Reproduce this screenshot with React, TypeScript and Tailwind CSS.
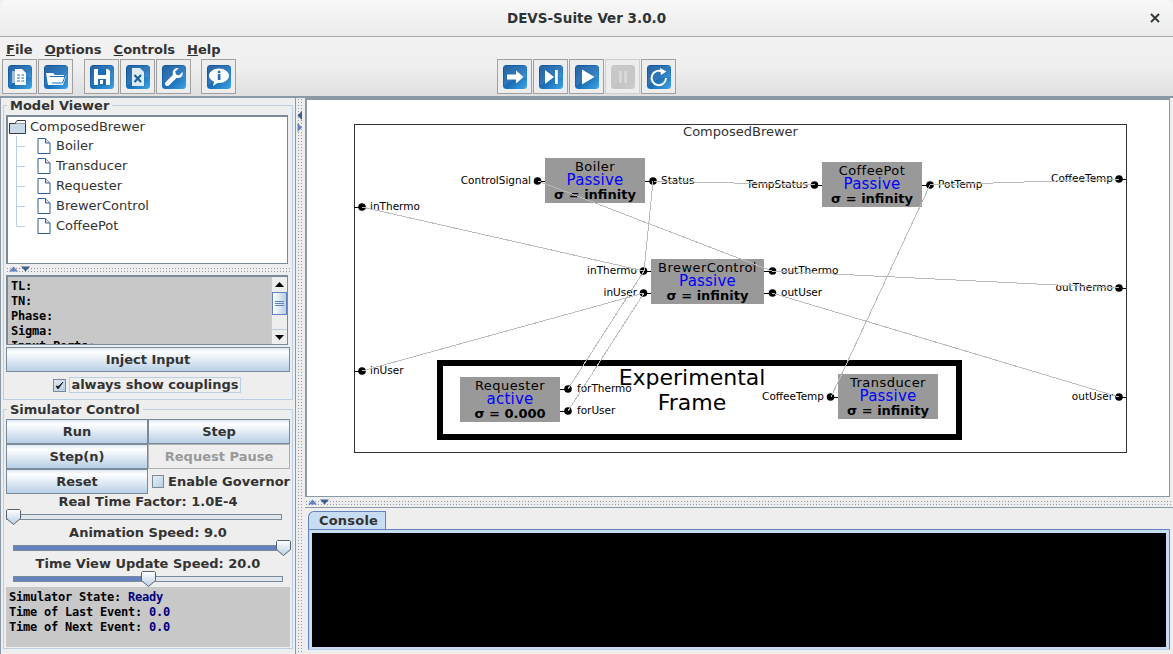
import React from "react";

const BTN =
  "flex items-center justify-center font-bold text-[13px] text-[#333] bg-linear-to-b from-[#dfe9f3] via-white via-[18%] to-[#b8cfe5] border border-[#7a8a99]";
const MONO = "font-['DejaVu_Sans_Mono',monospace] font-bold text-[12px] leading-[15px] tracking-[-0.22px] text-black";
const DOTS =
  "bg-[radial-gradient(circle,#8f9ba8_0.7px,transparent_0.8px)] bg-size-[3px_3px]";

function Glyph({ id, disabled, children }: { id: string; disabled?: boolean; children: React.ReactNode }) {
  return (
    <svg width="24" height="24" viewBox="0 0 24 24">
      <defs>
        <linearGradient id={id} x1="0" y1="0" x2="1" y2="1">
          <stop offset="0" stopColor={disabled ? "#c8c8c8" : "#0f4f96"} />
          <stop offset="0.55" stopColor={disabled ? "#c4c4c4" : "#1a6fb8"} />
          <stop offset="1" stopColor={disabled ? "#cdcdcd" : "#3fa6e6"} />
        </linearGradient>
      </defs>
      <rect x="0" y="0" width="24" height="24" rx="3.5" fill={`url(#${id})`} />
      <path d="M1 1 H23 V12 C14 12 8 15 1 21 Z" fill="#ffffff" opacity={disabled ? 0.05 : 0.1} />
      {children}
    </svg>
  );
}

function ToolBtn({ disabled, id, children }: { disabled?: boolean; id: string; children: React.ReactNode }) {
  return (
    <div
      className={`w-[35px] h-[35px] flex items-center justify-center border bg-[#ededed] ${
        disabled ? "border-[#d0d0d0]" : "border-[#a0a0a0]"
      }`}
    >
      <Glyph id={id} disabled={disabled}>
        {children}
      </Glyph>
    </div>
  );
}

function FileIcon() {
  return (
    <svg width="14" height="16" viewBox="0 0 14 16" className="shrink-0">
      <path d="M1 0.5 H8.5 L13 5 V15.5 H1 Z" fill="#fff" stroke="#2f5f98" strokeWidth="1" />
      <path d="M8.5 0.5 V5 H13" fill="#d4e2f0" stroke="#2f5f98" strokeWidth="1" />
    </svg>
  );
}

function TreeRow({ label, last }: { label: string; last?: boolean }) {
  return (
    <div className="flex items-center h-[20px]">
      <svg width="22" height="20" viewBox="0 0 22 20" className="shrink-0">
        <path d={last ? "M1.5 0 V10.5 H10" : "M1.5 0 V20 M1.5 10.5 H10"} stroke="#b8cfe5" strokeWidth="1" fill="none" />
      </svg>
      <FileIcon />
      <span className="ml-[5px]">{label}</span>
    </div>
  );
}

function Slider({ trackClass, thumbClass, fillClass }: { trackClass: string; thumbClass: string; fillClass?: string }) {
  return (
    <div className="relative h-[16px]">
      <div className={`absolute top-[5px] h-[6px] border border-[#7a8a99] bg-[#dfe6ee] ${trackClass}`}>
        {fillClass && <div className={`h-full bg-[#6382bf] ${fillClass}`} />}
      </div>
      <svg width="15" height="16" viewBox="0 0 15 16" className={`absolute top-0 ${thumbClass}`}>
        <defs>
          <linearGradient id="thumbGrad" x1="0" y1="0" x2="0" y2="1">
            <stop offset="0" stopColor="#ffffff" />
            <stop offset="1" stopColor="#b8cfe5" />
          </linearGradient>
        </defs>
        <path d="M1.5 0.5 H13.5 L14.5 1.5 V9.5 L7.5 15.5 L0.5 9.5 V1.5 Z" fill="url(#thumbGrad)" stroke="#55606c" />
      </svg>
    </div>
  );
}

function Splitter({ className }: { className: string }) {
  return (
    <div className={`relative ${className}`}>
      <div className={`absolute inset-x-0 top-[3px] h-[6px] ${DOTS}`} />
      <svg width="24" height="6" viewBox="0 0 24 6" className="absolute left-[3px] top-[2px]">
        <path d="M0 5.5 L4.5 0.5 L9 5.5 Z" fill="#6382bf" />
        <path d="M12 0.5 H21 L16.5 5.5 Z" fill="#3f5f8f" />
      </svg>
    </div>
  );
}

type Port = { x: number; y: number; to: number; label: string; side: "l" | "r"; end: number };

const OX = 307;
const OY = 100;

const ports: Port[] = [
  { x: 362, y: 207, to: 354, label: "inThermo", side: "r", end: 370 },
  { x: 362, y: 371, to: 354, label: "inUser", side: "r", end: 370 },
  { x: 537.5, y: 181, to: 545, label: "ControlSignal", side: "l", end: 529 },
  { x: 653, y: 181, to: 645, label: "Status", side: "r", end: 661 },
  { x: 814.5, y: 185, to: 822, label: "TempStatus", side: "l", end: 806 },
  { x: 930, y: 185, to: 922, label: "PotTemp", side: "r", end: 938 },
  { x: 1119, y: 179, to: 1126, label: "CoffeeTemp", side: "l", end: 1111 },
  { x: 1119, y: 288, to: 1126, label: "outThermo", side: "l", end: 1111 },
  { x: 1119, y: 397, to: 1126, label: "outUser", side: "l", end: 1111 },
  { x: 643.5, y: 271, to: 651, label: "inThermo", side: "l", end: 635 },
  { x: 643.5, y: 293, to: 651, label: "inUser", side: "l", end: 635 },
  { x: 772.5, y: 271, to: 764, label: "outThermo", side: "r", end: 781 },
  { x: 772.5, y: 293, to: 764, label: "outUser", side: "r", end: 781 },
  { x: 568, y: 389, to: 560, label: "forThermo", side: "r", end: 577 },
  { x: 568, y: 411, to: 560, label: "forUser", side: "r", end: 577 },
  { x: 830.5, y: 397, to: 838, label: "CoffeeTemp", side: "l", end: 822 },
];

const links: [number, number, number, number][] = [
  [362, 207, 644, 271],
  [362, 371, 644, 293],
  [538, 181, 772, 271],
  [653, 181, 815, 185],
  [653, 181, 644, 271],
  [772, 271, 1119, 288],
  [772, 293, 1119, 397],
  [930, 185, 1119, 179],
  [930, 185, 831, 397],
  [568, 389, 644, 271],
  [568, 411, 644, 293],
];

const nodes = [
  { name: "Boiler", phase: "Passive", sigma: "σ = infinity", x: 545, y: 158, w: 100 },
  { name: "BrewerControl", phase: "Passive", sigma: "σ = infinity", x: 651, y: 259, w: 113 },
  { name: "CoffeePot", phase: "Passive", sigma: "σ = infinity", x: 822, y: 162, w: 100 },
  { name: "Requester", phase: "active", sigma: "σ = 0.000", x: 460, y: 377, w: 100 },
  { name: "Transducer", phase: "Passive", sigma: "σ = infinity", x: 838, y: 374, w: 100 },
];

function Diagram() {
  return (
    <div className="relative w-full h-full bg-white overflow-hidden">
      {/* coupled model */}
      <div className="absolute left-[47px] top-[24px] w-[773px] h-[329px] border border-[#333]" />
      <div className="absolute left-[47px] top-[24px] w-[773px] text-center text-[13px] leading-[15px] pt-[0px] text-[#333]">
        ComposedBrewer
      </div>
      {/* experimental frame */}
      <div className="absolute left-[130px] top-[260px] w-[525px] h-[80px] border-[6px] border-black" />
      <div className="absolute left-[260px] top-[265px] w-[250px] text-center text-[22px] leading-[25px] text-black">
        <div>Experimental</div>
        <div>Frame</div>
      </div>
      {nodes.map((n) => (
        <div
          key={n.name}
          className="absolute h-[45px] bg-[#999999] flex flex-col items-center justify-center text-black whitespace-nowrap overflow-hidden"
          style={{ left: n.x - OX, top: n.y - OY, width: n.w }}
        >
          <div className="text-[13px] font-medium leading-[13px] tracking-[0.45px]">{n.name}</div>
          <div className="text-[15px] leading-[14px] text-[#0000ff] tracking-[0.2px]">{n.phase}</div>
          <div className="text-[13px] font-bold leading-[15px]">{n.sigma}</div>
        </div>
      ))}
      {ports.map((p, i) => (
        <div
          key={i}
          className="absolute text-[10.5px] leading-[12px] text-black whitespace-nowrap"
          style={
            p.side === "r"
              ? { left: p.end - OX, top: p.y - OY - 7 }
              : { right: 1173 - 3 - OX - (p.end - OX) - 3 + 0, top: p.y - OY - 7 }
          }
        >
          {p.label}
        </div>
      ))}
      <svg className="absolute left-0 top-0" width="863" height="397" viewBox={`${OX} ${OY} 863 397`}>
        {ports.map((p, i) => (
          <g key={i}>
            <line x1={p.x} y1={p.y} x2={p.to} y2={p.y} stroke="#000" strokeWidth="1" shapeRendering="crispEdges" />
            <circle cx={p.x} cy={p.y} r="3.8" fill="#000" />
          </g>
        ))}
        {links.map((l, i) => (
          <line
            key={i}
            x1={l[0]}
            y1={l[1]}
            x2={l[2]}
            y2={l[3]}
            stroke="#bbbbbb"
            strokeWidth="1"
            shapeRendering="crispEdges"
          />
        ))}
      </svg>
    </div>
  );
}

export default function App() {
  return (
    <div className="w-[1173px] h-[654px] overflow-hidden flex flex-col bg-[#eeeeee] font-['DejaVu_Sans',sans-serif] text-[13px] text-[#333]">
      {/* Title bar */}
      <div className="h-[37px] shrink-0 rounded-t-[6px] bg-linear-to-b from-[#f8f8f8] to-[#ebebeb] border-b border-[#a8a8a8] flex items-center justify-center relative font-bold text-[#2e3436] text-[13.5px]">
        DEVS-Suite Ver 3.0.0
        <svg width="10" height="10" viewBox="0 0 10 10" className="absolute right-[13px] top-[13px]">
          <path d="M1 1 L9 9 M9 1 L1 9" stroke="#2e3436" strokeWidth="1.8" />
        </svg>
      </div>

      {/* Menu + toolbar */}
      <div className="h-[60px] shrink-0 bg-linear-to-b from-[#f2f2f2] via-[#efefef] to-[#dfdfdf] flex flex-col">
        <div className="h-[22px] flex items-center gap-[12px] pl-[6px] pt-[3px] font-bold text-[13px] leading-[16px]">
          <span><u>F</u>ile</span>
          <span><u>O</u>ptions</span>
          <span><u>C</u>ontrols</span>
          <span><u>H</u>elp</span>
        </div>
        <div className="relative h-[35px] flex items-center pl-[2px]">
          <div className="flex gap-[1px]">
            <ToolBtn id="g1">
              <path d="M7 4 H14 L18 8 V20 H7 Z" fill="#fff" />
              <path d="M9 10 H12 M9 13 H12 M9 16 H12 M13.5 10 H16 M13.5 13 H16 M13.5 16 H16" stroke="#1a6fb8" strokeWidth="1.2" />
              <path d="M4 6 H7 V18 H4 Z" fill="#fff" opacity="0.55" />
            </ToolBtn>
            <ToolBtn id="g2">
              <path d="M2 8 H9 L11 10 H20 V11.5 H22 L19 20 H4 Z" fill="#fff" />
              <path d="M6 11.5 H21 L18.5 18 H8" fill="none" stroke="#1a6fb8" strokeWidth="1" />
            </ToolBtn>
          </div>
          <div className="flex gap-[1px] ml-[11px]">
            <ToolBtn id="g3">
              <path d="M4 4 H18 L20 6 V20 H4 Z" fill="#fff" />
              <rect x="8" y="4" width="8" height="6" fill="#1a6fb8" />
              <rect x="8" y="14" width="8" height="6" fill="#1a6fb8" />
              <rect x="10" y="15" width="3" height="4" fill="#fff" />
            </ToolBtn>
            <ToolBtn id="g4">
              <path d="M6 3 H14 L18 7 V21 H6 Z" fill="#fff" opacity="0.85" />
              <path d="M8.5 10 L15 17 M15 10 L8.5 17" stroke="#15609f" strokeWidth="2" />
            </ToolBtn>
            <ToolBtn id="g5">
              <path
                d="M20.5 7 L17 10.5 L14 9.5 L13.2 6.5 L16.7 3.2 C13.5 2.5 10.5 4.8 10.8 8.3 L11 9.7 L3.6 17.2 C2.5 18.4 3 20 4 20.7 C5 21.4 6.3 21.2 7.2 20.3 L14.5 13 C18 13.8 21.5 11 20.5 7 Z"
                fill="#fff"
              />
            </ToolBtn>
          </div>
          <div className="flex ml-[10px]">
            <ToolBtn id="g6">
              <path d="M12 3.5 C17.5 3.5 22 6.8 22 10.8 C22 14.8 17.5 18 12 18 L10.5 18 L6 21 L7 16.6 C3.9 15.3 2 13.2 2 10.8 C2 6.8 6.5 3.5 12 3.5 Z" fill="#fff" />
              <rect x="10.8" y="9" width="2.6" height="6" fill="#1a6fb8" />
              <rect x="10.8" y="5.8" width="2.6" height="2.2" fill="#1a6fb8" />
            </ToolBtn>
          </div>
          <div className="flex gap-[1px] ml-[261px]">
            <ToolBtn id="g7">
              <path d="M4 9.5 H13 V5.5 L20.5 12 L13 18.5 V14.5 H4 Z" fill="#fff" />
            </ToolBtn>
            <ToolBtn id="g8">
              <path d="M6 5 L15 12 L6 19 Z" fill="#fff" />
              <rect x="16" y="5" width="2.8" height="14" fill="#fff" />
            </ToolBtn>
            <ToolBtn id="g9">
              <path d="M7 4.5 L19.5 12 L7 19.5 Z" fill="#fff" />
            </ToolBtn>
            <ToolBtn id="g10" disabled>
              <rect x="8" y="6" width="2.8" height="12" fill="#dadada" />
              <rect x="13.2" y="6" width="2.8" height="12" fill="#dadada" />
            </ToolBtn>
            <ToolBtn id="g11">
              <path d="M15.5 6.8 A7.2 7.2 0 1 0 19 13" fill="none" stroke="#fff" strokeWidth="2" />
              <path d="M13 3 L19.5 6.5 L14 10 Z" fill="#fff" />
            </ToolBtn>
          </div>
        </div>
      </div>

      {/* Main */}
      <div className="flex-1 min-h-0 flex border-t-2 border-[#8a99a6] -mt-[1px]">
        {/* Left column */}
        <div className="w-[296px] shrink-0 border-x border-[#8a99a6] pl-[2px] pr-[2px] pt-[7px] flex flex-col">
          {/* Model viewer */}
          <div className="relative h-[295px] shrink-0 border border-[#b8cfe5] px-[2px] pt-[9px]">
            <div className="absolute left-[3px] -top-[8px] px-[3px] bg-[#eeeeee] font-bold leading-[16px]">Model Viewer</div>
            <div className="w-[282px] h-[149px] bg-white border border-[#7a8a99] border-t-2 border-l-2 pl-[1px] pt-[1px]">
              <div className="flex items-center h-[18px]">
                <svg width="17" height="14" viewBox="0 0 17 14" className="shrink-0">
                  <path d="M0.5 3.5 H16.5 V13.5 H0.5 Z" fill="#c9d9ea" stroke="#33393f" />
                  <path d="M0.5 3.5 L6 3.5 L8 0.5 H16.5 V3.5" fill="#fff" stroke="#33393f" />
                </svg>
                <span className="ml-[4px]">ComposedBrewer</span>
              </div>
              <div className="pl-[6px]">
                <TreeRow label="Boiler" />
                <TreeRow label="Transducer" />
                <TreeRow label="Requester" />
                <TreeRow label="BrewerControl" />
                <TreeRow label="CoffeePot" last />
              </div>
            </div>
            <Splitter className="h-[11px]" />
            <div className="w-[282px] h-[70px] flex border border-[#7a8a99] border-t-2 border-l-2 bg-[#c8c8c8] overflow-hidden">
              <div className={`flex-1 pl-[3px] pt-[2px] ${MONO}`}>
                <div>TL:</div>
                <div>TN:</div>
                <div>Phase:</div>
                <div>Sigma:</div>
                <div>Input Ports:</div>
              </div>
              <div className="w-[16px] bg-[#eeeeee] border-l border-[#b8cfe5] flex flex-col">
                <div className="h-[15px] flex items-center justify-center">
                  <svg width="9" height="5" viewBox="0 0 9 5"><path d="M0 5 L4.5 0 L9 5 Z" fill="#000" /></svg>
                </div>
                <div className="h-[23px] border border-[#6382bf] bg-linear-to-r from-[#fff] to-[#b8cfe5] flex flex-col items-center justify-center gap-[1px]">
                  <div className="w-[9px] h-[1px] bg-[#6382bf]" />
                  <div className="w-[9px] h-[1px] bg-[#6382bf]" />
                  <div className="w-[9px] h-[1px] bg-[#6382bf]" />
                </div>
                <div className="flex-1" />
                <div className="h-[15px] border-t border-[#b8cfe5] flex items-center justify-center">
                  <svg width="9" height="5" viewBox="0 0 9 5"><path d="M0 0 L9 0 L4.5 5 Z" fill="#000" /></svg>
                </div>
              </div>
            </div>
            <div className={`${BTN} w-[284px] h-[25px] mt-[2px]`}>Inject Input</div>
            <div className="flex items-center justify-center h-[24px] mt-[1px] pr-[2px]">
              <div className="w-[13px] h-[13px] border border-[#7a8a99] bg-linear-to-br from-[#dfe9f3] to-[#b8cfe5] flex items-center justify-center">
                <svg width="9" height="9" viewBox="0 0 9 9"><path d="M1 5 L3 8 L8 1 L4 5 L3 5.5 Z" fill="#111" stroke="#111" strokeWidth="0.8" /></svg>
              </div>
              <span className="ml-[3px] px-[1px] h-[16px] flex items-center border border-[#b8cfe5] font-bold leading-[14px]">
                always show couplings
              </span>
            </div>
          </div>

          {/* Simulator control */}
          <div className="relative h-[240px] shrink-0 mt-[9px] border border-[#b8cfe5] px-[2px] pt-[9px]">
            <div className="absolute left-[3px] -top-[8px] px-[3px] bg-[#eeeeee] font-bold leading-[16px]">Simulator Control</div>
            <div className="grid grid-cols-2 w-[284px] auto-rows-[25px]">
              <div className={BTN}>Run</div>
              <div className={BTN}>Step</div>
              <div className={BTN}>Step(n)</div>
              <div className="flex items-center justify-center font-bold text-[#999] border border-[#b0b0b0]">Request Pause</div>
              <div className={BTN}>Reset</div>
              <div className="flex items-center pl-[4px] font-bold">
                <div className="w-[13px] h-[13px] border border-[#7a8a99] bg-linear-to-br from-[#e6eef6] to-[#b8cfe5]" />
                <span className="ml-[4px] whitespace-nowrap">Enable Governor</span>
              </div>
            </div>
            <div className="h-[15px] flex items-center justify-center font-bold text-center">Real Time Factor: 1.0E-4</div>
            <Slider trackClass="left-0 w-[276px]" thumbClass="left-0" />
            <div className="h-[15px] flex items-center justify-center font-bold text-center">Animation Speed: 9.0</div>
            <Slider trackClass="left-[7px] w-[270px]" thumbClass="left-[270px]" fillClass="w-full" />
            <div className="h-[15px] flex items-center justify-center font-bold text-center">Time View Update Speed: 20.0</div>
            <Slider trackClass="left-[7px] w-[270px]" thumbClass="left-[135px]" fillClass="w-[130px]" />
            <div className={`w-[284px] h-[60px] bg-[#c8c8c8] pl-[3px] pt-[3px] ${MONO}`}>
              <div>Simulator State: <span className="text-[#000080]">Ready</span></div>
              <div>Time of Last Event: <span className="text-[#000080]">0.0</span></div>
              <div>Time of Next Event: <span className="text-[#000080]">0.0</span></div>
            </div>
          </div>
        </div>

        {/* Vertical splitter */}
        <div className="relative w-[9px] shrink-0">
          <div className={`absolute inset-y-0 left-[1px] w-[6px] ${DOTS}`} />
          <svg width="6" height="24" viewBox="0 0 6 24" className="absolute left-[1px] top-[13px]">
            <path d="M5 0 L0.5 4.5 L5 9 Z" fill="#3f5f8f" />
            <path d="M0.5 12 L5 16.5 L0.5 21 Z" fill="#6382bf" />
          </svg>
        </div>

        {/* Right column */}
        <div className="flex-1 min-w-0 flex flex-col">
          <div className="h-[399px] shrink-0 w-[865px] border border-[#8a99a6] border-t-2 border-l-2">
            <Diagram />
          </div>
          <Splitter className="h-[11px] shrink-0 border-b border-[#8a99a6] w-[868px]" />
          <div className="flex-1 min-h-0 flex flex-col pl-[3px] pt-[3px]">
            <div className="w-[78px] h-[18px] shrink-0 rounded-tl-[6px] bg-[#c8ddf2] border-t border-r border-l border-[#6382bf] font-bold flex items-center pl-[10px] tracking-[0.2px]">
              Console
            </div>
            <div className="w-[862px] h-[121px] shrink-0 border border-[#6382bf] border-b-[#b8cfe5] bg-[#c8ddf2] p-[3px] pb-[2px]">
              <div className="w-full h-full bg-black" />
            </div>
          </div>
        </div>
      </div>
    </div>
  );
}
